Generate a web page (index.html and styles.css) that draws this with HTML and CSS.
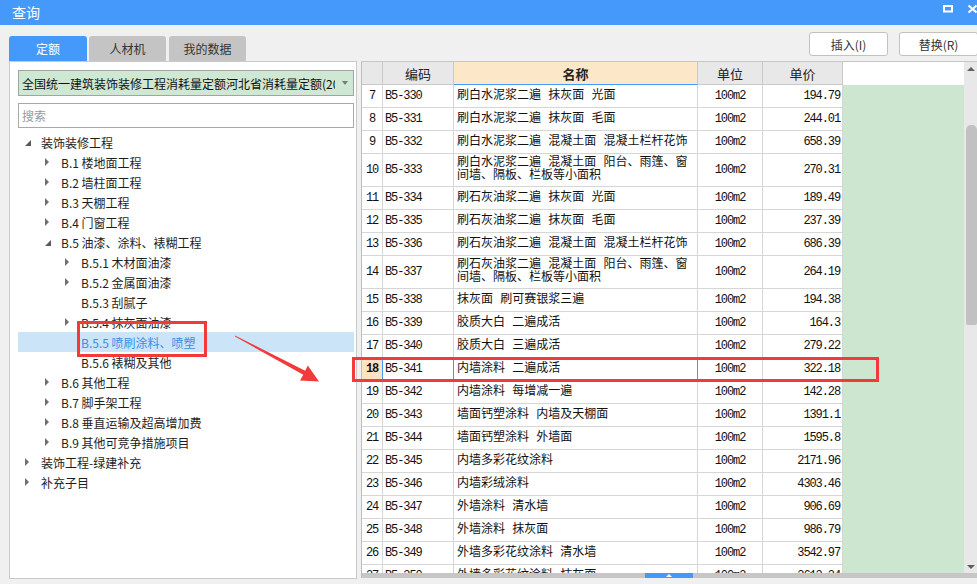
FILE: index.html
```html
<!DOCTYPE html>
<html lang="zh-CN">
<head>
<meta charset="utf-8">
<title>查询</title>
<link rel="stylesheet" href="styles.css">
</head>
<body>
<div class="titlebar">
  <span class="title">查询</span>
  <svg class="winbtns" width="44" height="25" viewBox="0 0 44 25">
    <rect x="11" y="6" width="8" height="5.5" fill="none" stroke="#fff" stroke-width="2"/>
    <path d="M35.5 5.5 L43.5 12.5 M43.5 5.5 L35.5 12.5" stroke="#fff" stroke-width="2"/>
  </svg>
</div>

<div class="topbar">
  <div class="tabs">
    <div class="tab active">定额</div>
    <div class="tab t2">人材机</div>
    <div class="tab t3">我的数据</div>
  </div>
  <div class="actions">
    <button class="btn">插入(I)</button>
    <button class="btn">替换(R)</button>
  </div>
</div>

<div class="main">
  <div class="left">
    <div class="select">
      <span class="select-text">全国统一建筑装饰装修工程消耗量定额河北省消耗量定额(2017)</span>
      <span class="select-arrow"><i></i></span>
    </div>
    <div class="search">搜索</div>
    <div class="tree">
      <div class="node l1"><span class="tg"><i class="exp"></i></span>装饰装修工程</div>
      <div class="node l2"><span class="tg"><i class="col"></i></span>B.1 楼地面工程</div>
      <div class="node l2"><span class="tg"><i class="col"></i></span>B.2 墙柱面工程</div>
      <div class="node l2"><span class="tg"><i class="col"></i></span>B.3 天棚工程</div>
      <div class="node l2"><span class="tg"><i class="col"></i></span>B.4 门窗工程</div>
      <div class="node l2"><span class="tg"><i class="exp"></i></span>B.5 油漆、涂料、裱糊工程</div>
      <div class="node l3"><span class="tg"><i class="col"></i></span>B.5.1 木材面油漆</div>
      <div class="node l3"><span class="tg"><i class="col"></i></span>B.5.2 金属面油漆</div>
      <div class="node l3"><span class="tg"></span>B.5.3 刮腻子</div>
      <div class="node l3"><span class="tg"><i class="col"></i></span>B.5.4 抹灰面油漆</div>
      <div class="node l3 sel"><span class="tg"></span>B.5.5 喷刷涂料、喷塑</div>
      <div class="node l3"><span class="tg"></span>B.5.6 裱糊及其他</div>
      <div class="node l2"><span class="tg"><i class="col"></i></span>B.6 其他工程</div>
      <div class="node l2"><span class="tg"><i class="col"></i></span>B.7 脚手架工程</div>
      <div class="node l2"><span class="tg"><i class="col"></i></span>B.8 垂直运输及超高增加费</div>
      <div class="node l2"><span class="tg"><i class="col"></i></span>B.9 其他可竞争措施项目</div>
      <div class="node l1"><span class="tg"><i class="col"></i></span>装饰工程-绿建补充</div>
      <div class="node l1"><span class="tg"><i class="col"></i></span>补充子目</div>
    </div>
  </div>

  <div class="right">
    <div class="gridarea">
      <div class="table">
        <div class="row hd">
          <div class="c"></div>
          <div class="c">编码</div>
          <div class="c hname">名称</div>
          <div class="c">单位</div>
          <div class="c">单价</div>
          <div class="c hfill"></div>
        </div>
        <div class="row"><div class="c num">7</div><div class="c code">B5-330</div><div class="c name">刷白水泥浆二遍 抹灰面 光面</div><div class="c unit">100m2</div><div class="c price">194.79</div><div class="c fill"></div></div>
        <div class="row"><div class="c num">8</div><div class="c code">B5-331</div><div class="c name">刷白水泥浆二遍 抹灰面 毛面</div><div class="c unit">100m2</div><div class="c price">244.01</div><div class="c fill"></div></div>
        <div class="row"><div class="c num">9</div><div class="c code">B5-332</div><div class="c name">刷白水泥浆二遍 混凝土面 混凝土栏杆花饰</div><div class="c unit">100m2</div><div class="c price">658.39</div><div class="c fill"></div></div>
        <div class="row tall"><div class="c num">10</div><div class="c code">B5-333</div><div class="c name">刷白水泥浆二遍 混凝土面 阳台、雨篷、窗<br>间墙、隔板、栏板等小面积</div><div class="c unit">100m2</div><div class="c price">270.31</div><div class="c fill"></div></div>
        <div class="row"><div class="c num">11</div><div class="c code">B5-334</div><div class="c name">刷石灰油浆二遍 抹灰面 光面</div><div class="c unit">100m2</div><div class="c price">189.49</div><div class="c fill"></div></div>
        <div class="row"><div class="c num">12</div><div class="c code">B5-335</div><div class="c name">刷石灰油浆二遍 抹灰面 毛面</div><div class="c unit">100m2</div><div class="c price">237.39</div><div class="c fill"></div></div>
        <div class="row"><div class="c num">13</div><div class="c code">B5-336</div><div class="c name">刷石灰油浆二遍 混凝土面 混凝土栏杆花饰</div><div class="c unit">100m2</div><div class="c price">686.39</div><div class="c fill"></div></div>
        <div class="row tall"><div class="c num">14</div><div class="c code">B5-337</div><div class="c name">刷石灰油浆二遍 混凝土面 阳台、雨篷、窗<br>间墙、隔板、栏板等小面积</div><div class="c unit">100m2</div><div class="c price">264.19</div><div class="c fill"></div></div>
        <div class="row"><div class="c num">15</div><div class="c code">B5-338</div><div class="c name">抹灰面 刷可赛银浆三遍</div><div class="c unit">100m2</div><div class="c price">194.38</div><div class="c fill"></div></div>
        <div class="row"><div class="c num">16</div><div class="c code">B5-339</div><div class="c name">胶质大白 二遍成活</div><div class="c unit">100m2</div><div class="c price">164.3</div><div class="c fill"></div></div>
        <div class="row"><div class="c num">17</div><div class="c code">B5-340</div><div class="c name">胶质大白 三遍成活</div><div class="c unit">100m2</div><div class="c price">279.22</div><div class="c fill"></div></div>
        <div class="row cur"><div class="c num">18</div><div class="c code">B5-341</div><div class="c name">内墙涂料 二遍成活</div><div class="c unit">100m2</div><div class="c price">322.18</div><div class="c fill"></div></div>
        <div class="row"><div class="c num">19</div><div class="c code">B5-342</div><div class="c name">内墙涂料 每增减一遍</div><div class="c unit">100m2</div><div class="c price">142.28</div><div class="c fill"></div></div>
        <div class="row"><div class="c num">20</div><div class="c code">B5-343</div><div class="c name">墙面钙塑涂料 内墙及天棚面</div><div class="c unit">100m2</div><div class="c price">1391.1</div><div class="c fill"></div></div>
        <div class="row"><div class="c num">21</div><div class="c code">B5-344</div><div class="c name">墙面钙塑涂料 外墙面</div><div class="c unit">100m2</div><div class="c price">1595.8</div><div class="c fill"></div></div>
        <div class="row"><div class="c num">22</div><div class="c code">B5-345</div><div class="c name">内墙多彩花纹涂料</div><div class="c unit">100m2</div><div class="c price">2171.96</div><div class="c fill"></div></div>
        <div class="row"><div class="c num">23</div><div class="c code">B5-346</div><div class="c name">内墙彩绒涂料</div><div class="c unit">100m2</div><div class="c price">4303.46</div><div class="c fill"></div></div>
        <div class="row"><div class="c num">24</div><div class="c code">B5-347</div><div class="c name">外墙涂料 清水墙</div><div class="c unit">100m2</div><div class="c price">906.69</div><div class="c fill"></div></div>
        <div class="row"><div class="c num">25</div><div class="c code">B5-348</div><div class="c name">外墙涂料 抹灰面</div><div class="c unit">100m2</div><div class="c price">986.79</div><div class="c fill"></div></div>
        <div class="row"><div class="c num">26</div><div class="c code">B5-349</div><div class="c name">外墙多彩花纹涂料 清水墙</div><div class="c unit">100m2</div><div class="c price">3542.97</div><div class="c fill"></div></div>
        <div class="row"><div class="c num">27</div><div class="c code">B5-350</div><div class="c name">外墙多彩花纹涂料 抹灰面</div><div class="c unit">100m2</div><div class="c price">3612.34</div><div class="c fill"></div></div>
      </div>
      <div class="vscroll">
        <div class="vs-up"><i></i></div>
        <div class="vs-thumb"></div>
        <div class="vs-down"><i></i></div>
      </div>
    </div>
    <div class="hbar"><div class="hbar-blue"><i></i></div></div>
  </div>
</div>

<svg class="annot" width="977" height="584" viewBox="0 0 977 584">
  <rect x="78.5" y="322.5" width="127" height="33" fill="none" stroke="#f23a3a" stroke-width="3"/>
  <rect x="353.5" y="358.5" width="524" height="22" fill="none" stroke="#f23a3a" stroke-width="3"/>
  <polygon points="235,335.5 305.2,370.8 307.8,365.5 319,381.5 300,380.5 303.3,374.8 235,336.5" fill="#f23a3a"/>
</svg>
</body>
</html>
```

FILE: styles.css
```css
* { box-sizing: border-box; }
html, body { margin: 0; padding: 0; }
body {
  width: 977px;
  height: 584px;
  overflow: hidden;
  position: relative;
  background: #f0f0f0;
  font-family: "Noto Sans CJK SC", "Microsoft YaHei", sans-serif;
  font-size: 12px;
  color: #222;
}

/* title bar */
.titlebar {
  height: 25px;
  background: #4599fb;
  color: #fff;
  display: flex;
  align-items: center;
  padding-left: 12px;
  font-size: 14px;
}
.title { flex: 1; line-height: 25px; }
.winbtns { display: block; flex: none; }

/* tabs + buttons */
.topbar {
  height: 36px;
  display: flex;
  justify-content: space-between;
  align-items: flex-end;
}
.tabs { display: flex; padding-left: 9px; }
.tab {
  height: 25px;
  width: 77px;
  display: flex;
  align-items: center;
  justify-content: center;
  background: #c4c4c4;
  color: #333;
  border-radius: 3px 3px 0 0;
  font-size: 12px;
}
.tab.active { width: 78px; background: #4599fb; color: #fff; }
.tab.t2 { margin-left: 2px; }
.tab.t3 { margin-left: 3px; }
.actions {
  align-self: flex-start;
  margin-top: 7px;
  margin-right: -1px;
  display: flex;
  gap: 11px;
}
.btn {
  width: 79px;
  height: 24px;
  background: #fff;
  border: 1px solid #c2c2c2;
  border-radius: 3px;
  font-family: "Noto Sans CJK SC", sans-serif;
  font-size: 12px;
  color: #333;
  padding: 0;
}

/* main */
.main { display: flex; height: 523px; }

.left {
  width: 348px;
  height: 518px;
  margin-left: 9px;
  background: #fff;
  border: 1px solid #c9c9c9;
  padding: 8px 2px 0 8px;
}
.select {
  height: 26px;
  background: #cfe8d3;
  border: 1px solid #a3a3a3;
  display: flex;
  align-items: center;
  padding-left: 3px;
}
.select-text {
  flex: 1;
  overflow: hidden;
  white-space: nowrap;
  font-size: 12px;
  color: #111;
}
.select-arrow {
  width: 18px;
  display: flex;
  justify-content: center;
  align-items: center;
}
.select-arrow i {
  display: block;
  width: 0; height: 0;
  border-left: 3px solid transparent;
  border-right: 3px solid transparent;
  border-top: 4px solid #7a7a7a;
  margin-left: 2px;
}
.search {
  margin-top: 7px;
  height: 25px;
  border: 1px solid #a8a8a8;
  padding-left: 3px;
  color: #9a9a9a;
  display: flex;
  align-items: center;
}
.tree { margin-top: 4px; }
.node {
  height: 20px;
  display: flex;
  align-items: center;
  white-space: nowrap;
  color: #1e1e1e;
}
.node.l1 { padding-left: 3px; }
.node.l2 { padding-left: 23px; }
.node.l3 { padding-left: 43px; }
.node.sel { background: #cce4f7; color: #3a8de6; }
.tg {
  width: 20px;
  height: 20px;
  flex: none;
  display: flex;
  align-items: center;
  padding-left: 4px;
}
.tg .exp {
  display: block;
  width: 0; height: 0;
  border-left: 6px solid transparent;
  border-bottom: 6px solid #5a5a5a;
  margin-top: 1px;
}
.tg .col {
  display: block;
  width: 0; height: 0;
  border-left: 4px solid #707070;
  border-top: 4px solid transparent;
  border-bottom: 4px solid transparent;
}

/* right grid */
.right {
  flex: 1;
  margin-left: 4px;
  height: 517px;
  border-left: 1px solid #bdbdbd;
  border-top: 1px solid #c6c6c6;
  display: flex;
  flex-direction: column;
}
.gridarea { display: flex; height: 511px; }
.table { flex: 1; overflow: hidden; background: #fff; }
.row {
  display: grid;
  grid-template-columns: 21px 71px 244px 65px 80px 1fr;
  height: 23px;
}
.row.tall { height: 33px; }
.c {
  border-right: 1px solid #d6d6d6;
  border-bottom: 1px solid #d6d6d6;
  display: flex;
  align-items: center;
  overflow: hidden;
  white-space: nowrap;
}
.hd { background: #e8e8e8; }
.hd .c {
  justify-content: center;
  font-size: 13px;
  color: #222;
  border-color: #c9c9c9;
}
.hd .hname {
  background: #fde7c9;
  font-weight: bold;
  border-bottom: 1px solid #4599fb;
}
.hd .hfill { background: #fff; border: none; }

.num, .code, .unit, .price {
  font-family: "Liberation Mono", monospace;
  font-size: 12px;
  letter-spacing: -1.1px;
  color: #111;
}
.num { justify-content: center; }
.code { padding-left: 2px; }
.unit { justify-content: center; }
.price { justify-content: flex-end; padding-right: 2px; }
.name {
  font-family: "Liberation Mono", "Noto Sans CJK SC", monospace;
  font-size: 12px;
  line-height: 13px;
  padding-left: 3px;
  color: #111;
}
.fill { background: #cde6d0; border: none; }

.row.cur .num {
  background: #fde3c3;
  font-weight: bold;
  font-size: 12px;
  border-right-color: #4599fb;
}
.row.cur .code { border-right-color: #4599fb; }
.row.cur .name { border-right-color: #4599fb; }

/* scrollbars */
.vscroll {
  width: 13px;
  background: #e8e8e8;
  display: flex;
  flex-direction: column;
}
.vs-up, .vs-down {
  height: 14px;
  display: flex;
  justify-content: center;
  align-items: center;
}
.vs-down { margin-top: auto; height: 12px; }
.vs-up i {
  display: block;
  width: 0; height: 0;
  border-left: 4px solid transparent;
  border-right: 4px solid transparent;
  border-bottom: 4px solid #606060;
}
.vs-down i {
  display: block;
  width: 0; height: 0;
  border-left: 4px solid transparent;
  border-right: 4px solid transparent;
  border-top: 4px solid #606060;
}
.vs-thumb {
  margin-top: 49px;
  margin-left: 2px;
  width: 11px;
  height: 200px;
  background: #c1c1c1;
  border-radius: 5px 5px 2px 2px;
}
.hbar {
  height: 5px;
  background: #c6c6c6;
  display: flex;
}
.hbar-blue {
  margin-left: 283px;
  width: 48px;
  height: 5px;
  background: #4599fb;
  display: flex;
  justify-content: center;
  align-items: center;
}
.hbar-blue i {
  display: block;
  width: 0; height: 0;
  border-left: 3px solid transparent;
  border-right: 3px solid transparent;
  border-bottom: 3px solid #fff;
}

/* annotation overlay */
.annot {
  position: absolute;
  left: 0;
  top: 0;
  pointer-events: none;
}
```
